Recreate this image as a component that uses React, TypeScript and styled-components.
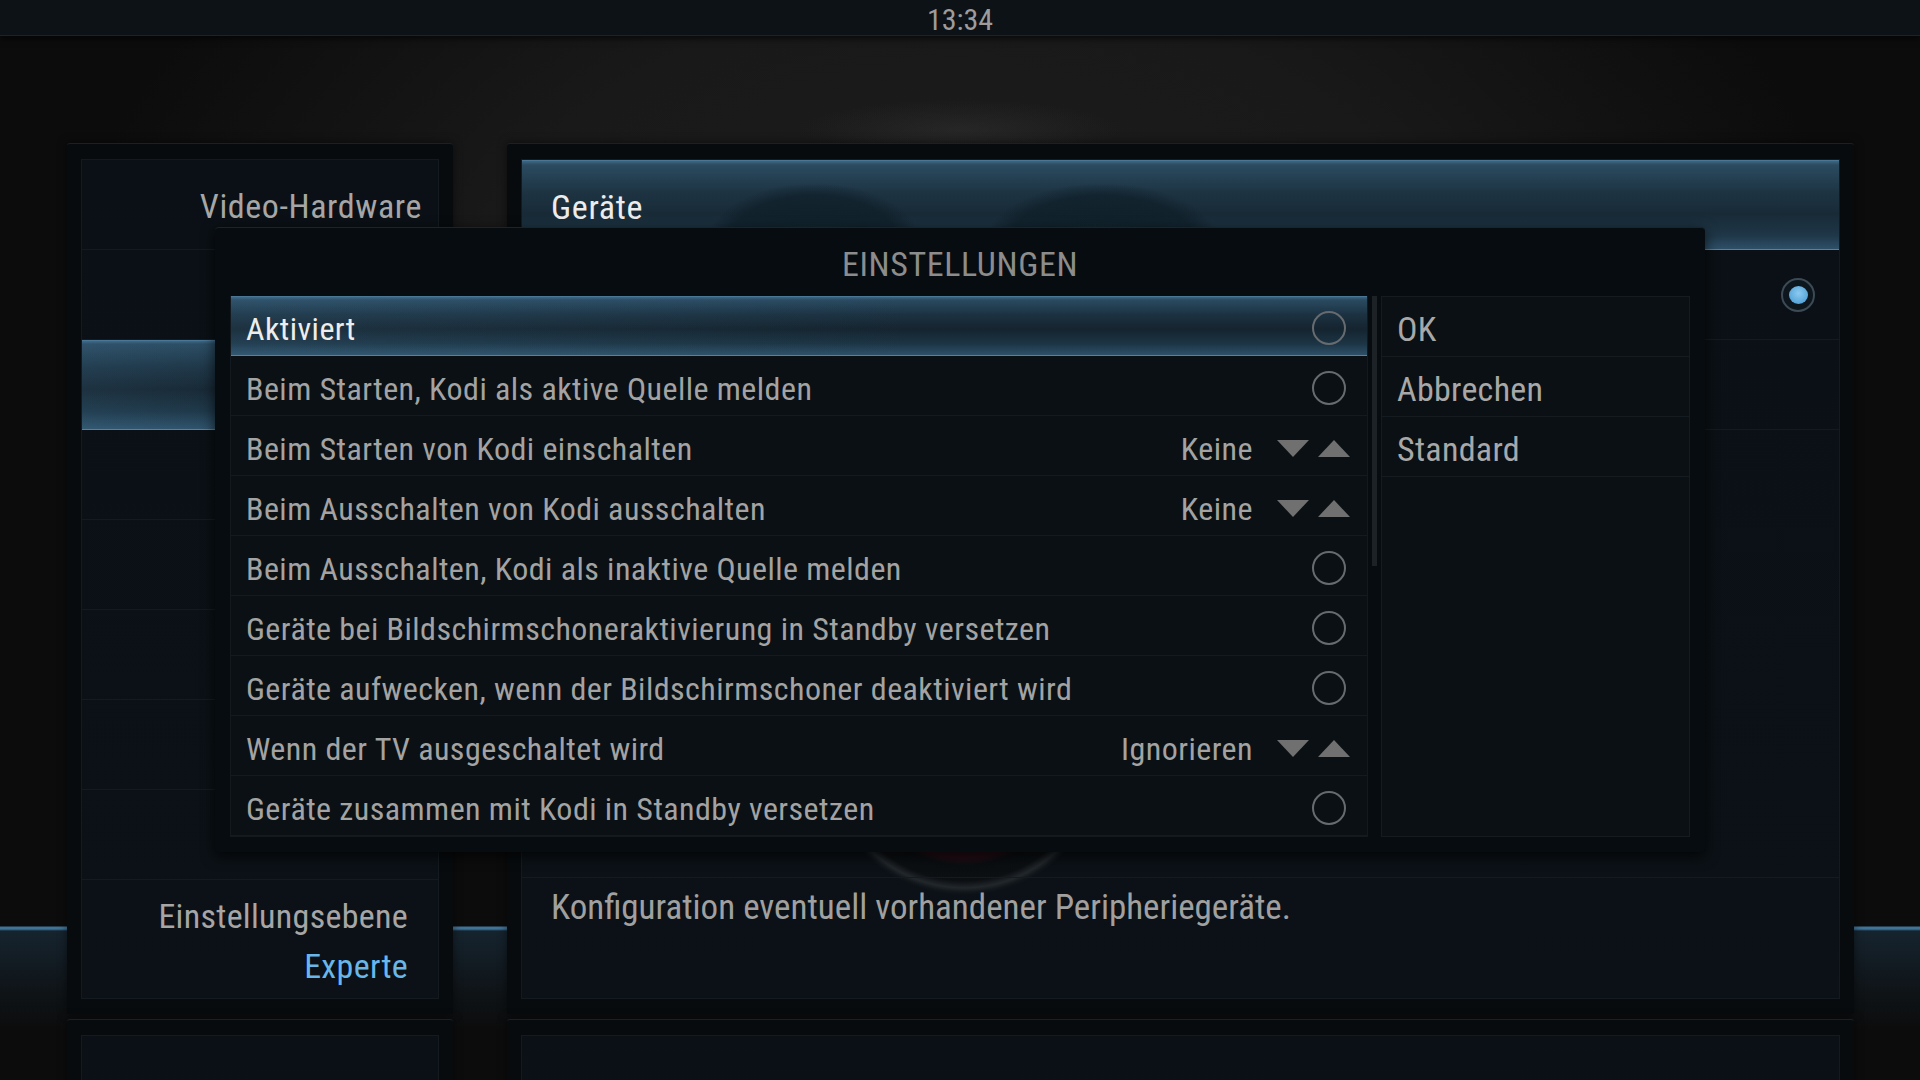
import React from "react";
import styled, { createGlobalStyle } from "styled-components";

const FONT = `"Roboto Condensed", "Roboto", "Liberation Sans Narrow", "Liberation Sans", sans-serif`;

const Global = createGlobalStyle`
  html, body { margin: 0; padding: 0; background: #111; }
  body { font-family: ${FONT}; }
  * { box-sizing: border-box; }
`;

const Screen = styled.div`
  position: relative;
  width: 1920px;
  height: 1080px;
  overflow: hidden;
  font-family: ${FONT};
  background:
    linear-gradient(to bottom, transparent 926px, rgba(80,150,200,0.75) 927px, rgba(80,150,200,0.75) 929px, rgba(40,80,110,0.35) 931px, rgba(25,45,60,0.25) 990px, transparent 1030px),
    radial-gradient(ellipse 160px 30px at 960px 130px, rgba(60,60,60,0.35), transparent 100%),
    radial-gradient(ellipse 900px 600px at 960px 330px, #1d1d1d 0%, #191919 55%, #0c0c0c 100%);
`;

const TopBar = styled.div`
  height: 36px;
  background: #0c1216;
  border-bottom: 1px solid #17242c;
  box-shadow: 0 3px 6px rgba(0,0,0,0.6);
  display: flex;
  align-items: center;
  justify-content: center;
`;

const Clock = styled.span`
  color: #9c9c9c;
  font-size: 30px;
  line-height: 1;
  padding-top: 5px;
`;

const Stage = styled.div`
  display: flex;
  flex-direction: column;
  gap: 5px;
  padding: 107px 66px 0 67px;
`;

const PanelRow = styled.div`
  display: flex;
  gap: 54px;
`;

const Outer = styled.div<{ $w: number; $h: number }>`
  width: ${(p) => p.$w}px;
  height: ${(p) => p.$h}px;
  padding: 15px 14px;
  background: #070b0e;
  border-radius: 3px;
  border-top: 1px solid #13232d;
  box-shadow: 0 0 10px rgba(0,0,0,0.5);
  flex-shrink: 0;
`;

const Inner = styled.div<{ $art?: boolean }>`
  height: 100%;
  background: ${(p) =>
    p.$art
      ? `radial-gradient(circle 142px at 442px 593px, rgba(66,12,24,0.6) 0%, rgba(52,10,20,0.55) 74%, rgba(10,12,14,0.6) 79%, rgba(12,14,16,0.6) 90%, rgba(62,66,70,0.45) 95%, rgba(40,44,48,0.2) 98%, transparent 100%), linear-gradient(to bottom, #0a1015, #0b1116)`
      : `linear-gradient(to bottom, #0a1015, #0b1116)`};
  border: 1px solid #141b20;
  display: flex;
  flex-direction: column;
  overflow: hidden;
`;

const selectedBg = `
  linear-gradient(to right, rgba(90,150,190,0.12), rgba(90,150,190,0) 60%),
  linear-gradient(to bottom, #3c6582 0px, #2a4a60 3px, #1c3242 30%, #15242f 55%, #1c3444 80%, #2d5068 100%)
`;

const SideRow = styled.div<{ $sel?: boolean }>`
  height: 90px;
  flex-shrink: 0;
  border-bottom: 1px solid #141b20;
  display: flex;
  align-items: center;
  justify-content: flex-end;
  padding: 3px 16px 0;
  font-size: 34px;
  letter-spacing: 0.6px;
  color: #a6a6a6;
  background: ${(p) => (p.$sel ? selectedBg : "transparent")};
  ${(p) => (p.$sel ? "border-top: 1px solid #4a7796; border-bottom: 1px solid #4f84a6;" : "")}
`;

const LevelBlock = styled.div`
  flex: 1;
  display: flex;
  flex-direction: column;
  align-items: flex-end;
  padding: 11px 30px 0;
  font-size: 34px;
  letter-spacing: 0.3px;
  line-height: 50px;
`;

const LevelLabel = styled.span`
  color: #a6a6a6;
`;

const LevelValue = styled.span`
  color: #69b6ea;
`;

const Header = styled.div`
  height: 90px;
  flex-shrink: 0;
  display: flex;
  align-items: center;
  padding: 3px 29px 0;
  font-size: 34px;
  letter-spacing: 0.7px;
  color: #ececec;
  border-top: 1px solid #4a7796;
  border-bottom: 1px solid #4f84a6;
  background:
    radial-gradient(ellipse 70px 30px at 292px 90px, rgba(40,75,45,0.45), transparent 100%),
    radial-gradient(ellipse 70px 30px at 580px 90px, rgba(40,75,45,0.45), transparent 100%),
    radial-gradient(ellipse 108px 62px at 292px 84px, rgba(14,30,40,0.85) 0%, rgba(14,30,40,0.7) 80%, transparent 100%),
    radial-gradient(ellipse 118px 62px at 580px 84px, rgba(14,30,40,0.85) 0%, rgba(14,30,40,0.7) 80%, transparent 100%),
    linear-gradient(to bottom, #3d6783 0px, #2b4b61 4px, #1e3443 35%, #182a36 60%, #1f3748 85%, #2e5069 100%);
`;

const ContentRow = styled.div`
  height: 90px;
  flex-shrink: 0;
  border-bottom: 1px solid #141b20;
  display: flex;
  align-items: center;
  justify-content: flex-end;
  padding: 0 24px;
`;

const Spacer = styled.div`
  flex: 1;
  border-bottom: 1px solid #141b20;
`;

const Description = styled.div`
  height: 120px;
  flex-shrink: 0;
  padding: 10px 29px 0;
  font-size: 35px;
  color: #a0a0a0;
  line-height: 40px;
`;

const RadioOuter = styled.div`
  width: 34px;
  height: 34px;
  border-radius: 50%;
  border: 2px solid #3b4a55;
  background: #0d161c;
  display: flex;
  align-items: center;
  justify-content: center;
`;

const RadioDot = styled.div`
  width: 19px;
  height: 18px;
  border-radius: 50%;
  background: radial-gradient(circle at 50% 40%, #8ccaf0, #57a6da 70%, #3f86b8);
`;

const Modal = styled.div`
  position: absolute;
  left: 215px;
  top: 227px;
  width: 1490px;
  height: 625px;
  background: #070c10;
  border-top: 1px solid #132631;
  border-radius: 4px;
  box-shadow: 0 4px 14px rgba(0,0,0,0.7);
  padding: 0 15px 15px;
  display: flex;
  flex-direction: column;
`;

const ModalTitle = styled.div`
  height: 70px;
  display: flex;
  align-items: center;
  justify-content: center;
  padding-top: 4px;
  font-size: 34px;
  letter-spacing: 0.6px;
  color: #8c8c8c;
`;

const ModalBody = styled.div`
  flex: 1;
  display: flex;
`;

const List = styled.div`
  width: 1138px;
  flex-shrink: 0;
  display: flex;
  flex-direction: column;
  background: #0a1014;
  border: 1px solid #121a1f;
  border-top: none;
`;

const ListRow = styled.div<{ $sel?: boolean }>`
  height: 60px;
  flex-shrink: 0;
  display: flex;
  align-items: center;
  gap: 24px;
  padding: 6px 17px 0 15px;
  border-bottom: 1px solid #141b20;
  font-size: 32px;
  letter-spacing: 0.45px;
  color: ${(p) => (p.$sel ? "#ededed" : "#a3a3a3")};
  background: ${(p) => (p.$sel ? selectedBg : "transparent")};
  ${(p) => (p.$sel ? "border-top: 1px solid #4a7796; border-bottom: 1px solid #4f84a6;" : "")}
`;

const Label = styled.span`
  flex: 1;
  white-space: nowrap;
`;

const Value = styled.span`
  color: #a3a3a3;
  white-space: nowrap;
`;

const Arrows = styled.div`
  display: flex;
  align-items: center;
  gap: 9px;
  margin-top: 0;
`;

const Circle = styled.div`
  width: 34px;
  height: 34px;
  margin: -2px 4px 0 0;
  border-radius: 50%;
  border: 2px solid #666b6f;
`;

const ScrollTrack = styled.div`
  width: 13px;
  flex-shrink: 0;
  display: flex;
  justify-content: center;
`;

const ScrollThumb = styled.div`
  width: 5px;
  height: 270px;
  background: #1c2226;
`;

const Buttons = styled.div`
  width: 309px;
  flex-shrink: 0;
  display: flex;
  flex-direction: column;
  background: #0a1014;
  border: 1px solid #151c21;
`;

const Btn = styled.div`
  height: 60px;
  flex-shrink: 0;
  display: flex;
  align-items: center;
  padding: 5px 15px 0;
  border-bottom: 1px solid #151c21;
  font-size: 34px;
  letter-spacing: 0.3px;
  color: #a8a8a8;
`;

const Tri = ({ up }: { up?: boolean }) => (
  <svg width="32" height="17" viewBox="0 0 32 17">
    <polygon points={up ? "16,0 32,17 0,17" : "0,0 32,0 16,17"} fill="#707070" />
  </svg>
);

type Item = { label: string; kind: "toggle" | "select"; value?: string };

const items: Item[] = [
  { label: "Aktiviert", kind: "toggle" },
  { label: "Beim Starten, Kodi als aktive Quelle melden", kind: "toggle" },
  { label: "Beim Starten von Kodi einschalten", kind: "select", value: "Keine" },
  { label: "Beim Ausschalten von Kodi ausschalten", kind: "select", value: "Keine" },
  { label: "Beim Ausschalten, Kodi als inaktive Quelle melden", kind: "toggle" },
  { label: "Geräte bei Bildschirmschoneraktivierung in Standby versetzen", kind: "toggle" },
  { label: "Geräte aufwecken, wenn der Bildschirmschoner deaktiviert wird", kind: "toggle" },
  { label: "Wenn der TV ausgeschaltet wird", kind: "select", value: "Ignorieren" },
  { label: "Geräte zusammen mit Kodi in Standby versetzen", kind: "toggle" },
];

export default function App() {
  return (
    <Screen>
      <Global />
      <TopBar>
        <Clock>13:34</Clock>
      </TopBar>
      <Stage>
        <PanelRow>
          <Outer $w={386} $h={871}>
            <Inner>
              <SideRow>Video-Hardware</SideRow>
              <SideRow />
              <SideRow $sel />
              <SideRow />
              <SideRow />
              <SideRow />
              <SideRow />
              <SideRow />
              <LevelBlock>
                <LevelLabel>Einstellungsebene</LevelLabel>
                <LevelValue>Experte</LevelValue>
              </LevelBlock>
            </Inner>
          </Outer>
          <Outer $w={1347} $h={871}>
            <Inner $art>
              <Header>Geräte</Header>
              <ContentRow>
                <RadioOuter>
                  <RadioDot />
                </RadioOuter>
              </ContentRow>
              <ContentRow />
              <Spacer />
              <Description>Konfiguration eventuell vorhandener Peripheriegeräte.</Description>
            </Inner>
          </Outer>
        </PanelRow>
        <PanelRow>
          <Outer $w={386} $h={200}>
            <Inner />
          </Outer>
          <Outer $w={1347} $h={200}>
            <Inner />
          </Outer>
        </PanelRow>
      </Stage>
      <Modal>
        <ModalTitle>EINSTELLUNGEN</ModalTitle>
        <ModalBody>
          <List>
            {items.map((it, i) => (
              <ListRow key={i} $sel={i === 0}>
                <Label>{it.label}</Label>
                {it.kind === "toggle" ? (
                  <Circle />
                ) : (
                  <>
                    <Value>{it.value}</Value>
                    <Arrows>
                      <Tri />
                      <Tri up />
                    </Arrows>
                  </>
                )}
              </ListRow>
            ))}
          </List>
          <ScrollTrack>
            <ScrollThumb />
          </ScrollTrack>
          <Buttons>
            <Btn>OK</Btn>
            <Btn>Abbrechen</Btn>
            <Btn>Standard</Btn>
          </Buttons>
        </ModalBody>
      </Modal>
    </Screen>
  );
}
